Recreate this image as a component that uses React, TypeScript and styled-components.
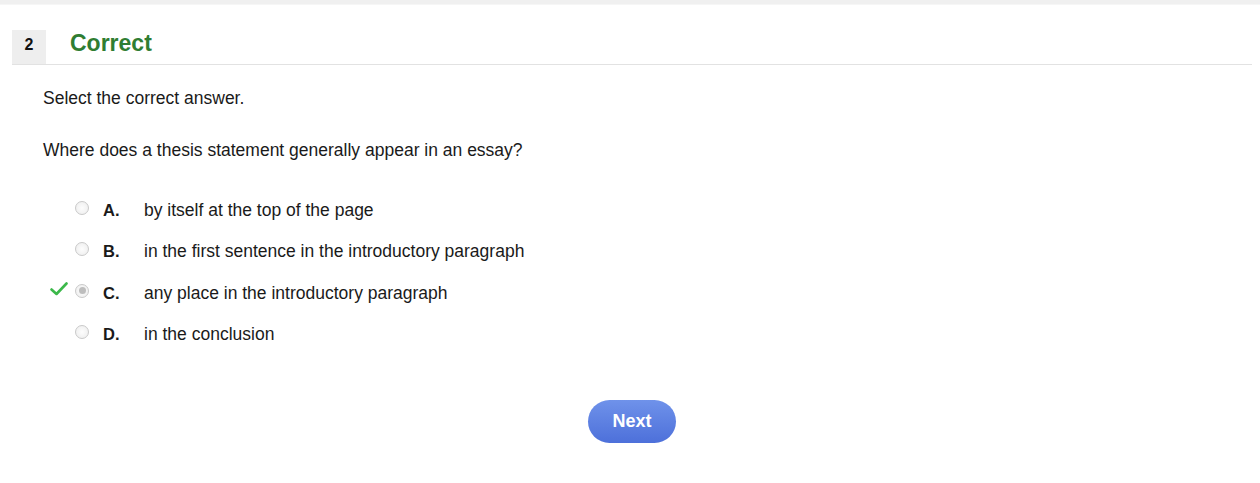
import React from "react";
import styled, { createGlobalStyle } from "styled-components";

const Global = createGlobalStyle`
  html, body { margin: 0; padding: 0; background: #fff; }
  body { font-family: "Liberation Sans", Arial, sans-serif; color: #1a1a1a; }
`;

const TopBand = styled.div`
  height: 4px;
  background: #f0f0f0;
  border-bottom: 1px solid #f6f6f6;
`;

const Page = styled.div`
  padding: 25px 8px 0 12px;
`;

const Header = styled.div`
  display: flex;
  align-items: stretch;
  height: 34px;
  border-bottom: 1px solid #e2e2e2;
`;

const Num = styled.div`
  width: 34px;
  background: #eeeeee;
  display: flex;
  align-items: center;
  justify-content: center;
  font-weight: bold;
  font-size: 16px;
  color: #111;
  padding-bottom: 4px;
  box-sizing: border-box;
`;

const Title = styled.div`
  margin-left: 24px;
  font-size: 23px;
  font-weight: bold;
  color: #2f7d32;
  line-height: 26px;
`;

const Body = styled.div`
  padding: 23px 0 0 31px;
  font-size: 17.5px;
`;

const Para = styled.p<{ $mb: number }>`
  margin: 0 0 ${(p) => p.$mb}px 0;
  line-height: 20px;
`;

const Options = styled.div`
  display: flex;
  flex-direction: column;
  gap: 21.5px;
`;

const Option = styled.div`
  display: flex;
  align-items: center;
  height: 20px;
  position: relative;
`;

const Check = styled.svg`
  position: absolute;
  left: 7px;
  top: -1px;
`;

const Radio = styled.span<{ $checked?: boolean }>`
  width: 14px;
  height: 14px;
  margin-left: 32px;
  margin-top: -5px;
  border-radius: 50%;
  border: 1px solid #c9c9c9;
  background: radial-gradient(circle, #fdfdfd 0%, #ececec 100%);
  box-sizing: border-box;
  display: flex;
  align-items: center;
  justify-content: center;
  &::after {
    content: "";
    width: 7px;
    height: 7px;
    border-radius: 50%;
    background: ${(p) => (p.$checked ? "#bdbdbd" : "transparent")};
  }
`;

const Letter = styled.span`
  width: 41px;
  margin-left: 14px;
  font-weight: bold;
  font-size: 16.5px;
`;

const OptText = styled.span`
  font-size: 17.5px;
`;

const ButtonRow = styled.div`
  display: flex;
  justify-content: center;
  margin-top: 55px;
`;

const NextButton = styled.button`
  width: 88px;
  height: 43px;
  border: none;
  border-radius: 22px;
  background: linear-gradient(#6f92ea, #4d70da);
  color: #fff;
  font-family: "Liberation Sans", Arial, sans-serif;
  font-weight: bold;
  font-size: 18px;
  cursor: pointer;
`;

const options = [
  { l: "A.", t: "by itself at the top of the page" },
  { l: "B.", t: "in the first sentence in the introductory paragraph" },
  { l: "C.", t: "any place in the introductory paragraph", correct: true },
  { l: "D.", t: "in the conclusion" },
];

export default function App() {
  return (
    <>
      <Global />
      <TopBand />
      <Page>
        <Header>
          <Num>2</Num>
          <Title>Correct</Title>
        </Header>
        <Body>
          <Para $mb={32}>Select the correct answer.</Para>
          <Para $mb={40}>Where does a thesis statement generally appear in an essay?</Para>
          <Options>
            {options.map((o) => (
              <Option key={o.l}>
                {o.correct && (
                  <Check width="18" height="14" viewBox="0 0 18 14">
                    <path d="M1.5 7.5 L6.5 12 L16.5 1.5" fill="none" stroke="#3cb84a" strokeWidth="2.6" strokeLinecap="round" strokeLinejoin="round" />
                  </Check>
                )}
                <Radio $checked={o.correct} />
                <Letter>{o.l}</Letter>
                <OptText>{o.t}</OptText>
              </Option>
            ))}
          </Options>
        </Body>
        <ButtonRow>
          <NextButton>Next</NextButton>
        </ButtonRow>
      </Page>
    </>
  );
}
